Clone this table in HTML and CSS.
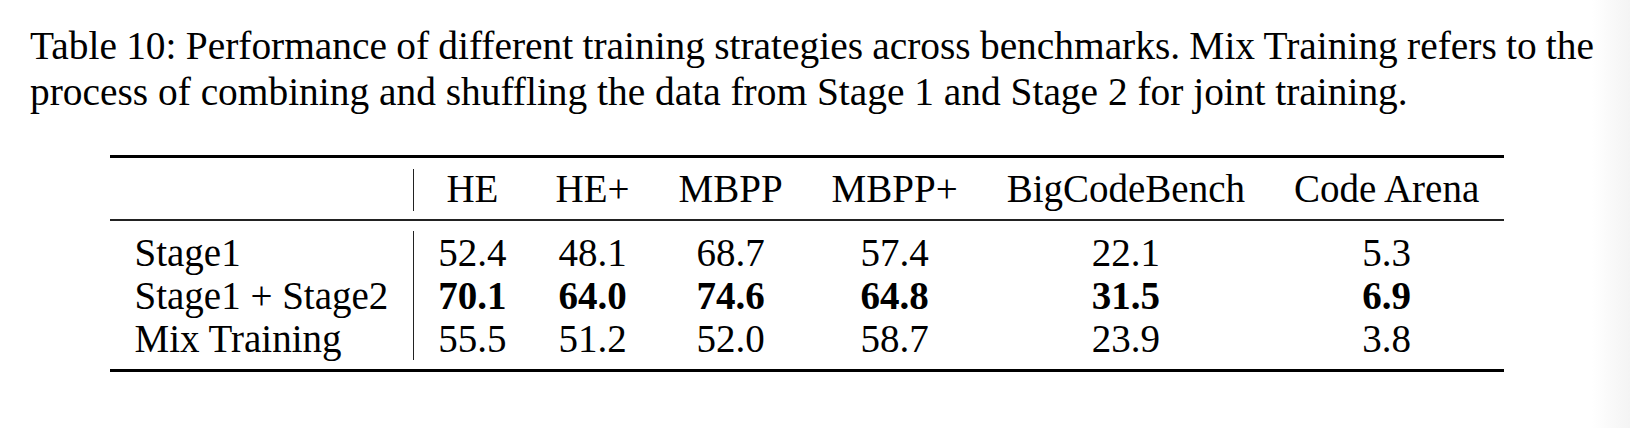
FILE: index.html
```html
<!DOCTYPE html>
<html lang="en">
<head>
<meta charset="utf-8">
<title>Table 10</title>
<link rel="stylesheet" href="styles.css">
</head>
<body>
<div class="page">
  <p class="caption">
    <span class="cap-line cap-first">Table 10: Performance of different training strategies across benchmarks. Mix Training refers to the</span>
    <span class="cap-line">process of combining and shuffling the data from Stage 1 and Stage 2 for joint training.</span>
  </p>
  <div class="tbl">
    <div class="rule rule-top"></div>
    <div class="gap gap-head-top"></div>
    <div class="cell lab head"></div>
    <div class="cell head">HE</div>
    <div class="cell head">HE+</div>
    <div class="cell head">MBPP</div>
    <div class="cell head">MBPP+</div>
    <div class="cell head">BigCodeBench</div>
    <div class="cell head">Code Arena</div>
    <div class="gap gap-mid-top"></div>
    <div class="rule rule-mid"></div>
    <div class="gap gap-mid-bot"></div>

    <div class="cell lab">Stage1</div>
    <div class="cell">52.4</div>
    <div class="cell">48.1</div>
    <div class="cell">68.7</div>
    <div class="cell">57.4</div>
    <div class="cell">22.1</div>
    <div class="cell">5.3</div>

    <div class="cell lab">Stage1 + Stage2</div>
    <div class="cell best">70.1</div>
    <div class="cell best">64.0</div>
    <div class="cell best">74.6</div>
    <div class="cell best">64.8</div>
    <div class="cell best">31.5</div>
    <div class="cell best">6.9</div>

    <div class="cell lab">Mix Training</div>
    <div class="cell">55.5</div>
    <div class="cell">51.2</div>
    <div class="cell">52.0</div>
    <div class="cell">58.7</div>
    <div class="cell">23.9</div>
    <div class="cell">3.8</div>

    <div class="gap gap-bot"></div>
    <div class="rule rule-bot"></div>
  </div>
</div>
</body>
</html>
```

FILE: styles.css
```css
html, body {
  margin: 0;
  padding: 0;
}
body {
  width: 1630px;
  height: 428px;
  overflow: hidden;
  background: linear-gradient(to right, #ffffff 1592px, #f4f4f4 1630px);
  font-family: "Liberation Serif", "Times New Roman", serif;
  color: #000;
}
.page {
  padding: 23px 0 0 30px;
}
.caption {
  margin: 0;
  width: 1564px;
  font-size: 39.4px;
  line-height: 46px;
}
.cap-line {
  display: block;
  white-space: nowrap;
}
.cap-first {
  word-spacing: -3.5px;
  text-align: justify;
  text-align-last: justify;
}
.tbl {
  margin: 40px 0 0 80px;
  display: inline-grid;
  grid-template-columns: repeat(7, auto);
  font-size: 39px;
}
.rule {
  grid-column: 1 / -1;
  background: #000;
}
.rule-top { height: 3px; }
.rule-mid { height: 2px; background: #222; }
.rule-bot { height: 3px; }
.gap { grid-column: 1 / -1; }
.gap-head-top { height: 11px; }
.gap-mid-top { height: 8px; }
.gap-mid-bot { height: 10px; }
.gap-bot { height: 9px; }
.cell {
  padding: 0 24.5px;
  height: 43px;
  line-height: 43px;
  text-align: center;
  white-space: nowrap;
}
.cell.head {
  height: 42px;
  line-height: 40px;
}
.cell.lab {
  text-align: left;
  border-right: 1px solid #222;
}
.cell.best {
  font-weight: bold;
}
```
